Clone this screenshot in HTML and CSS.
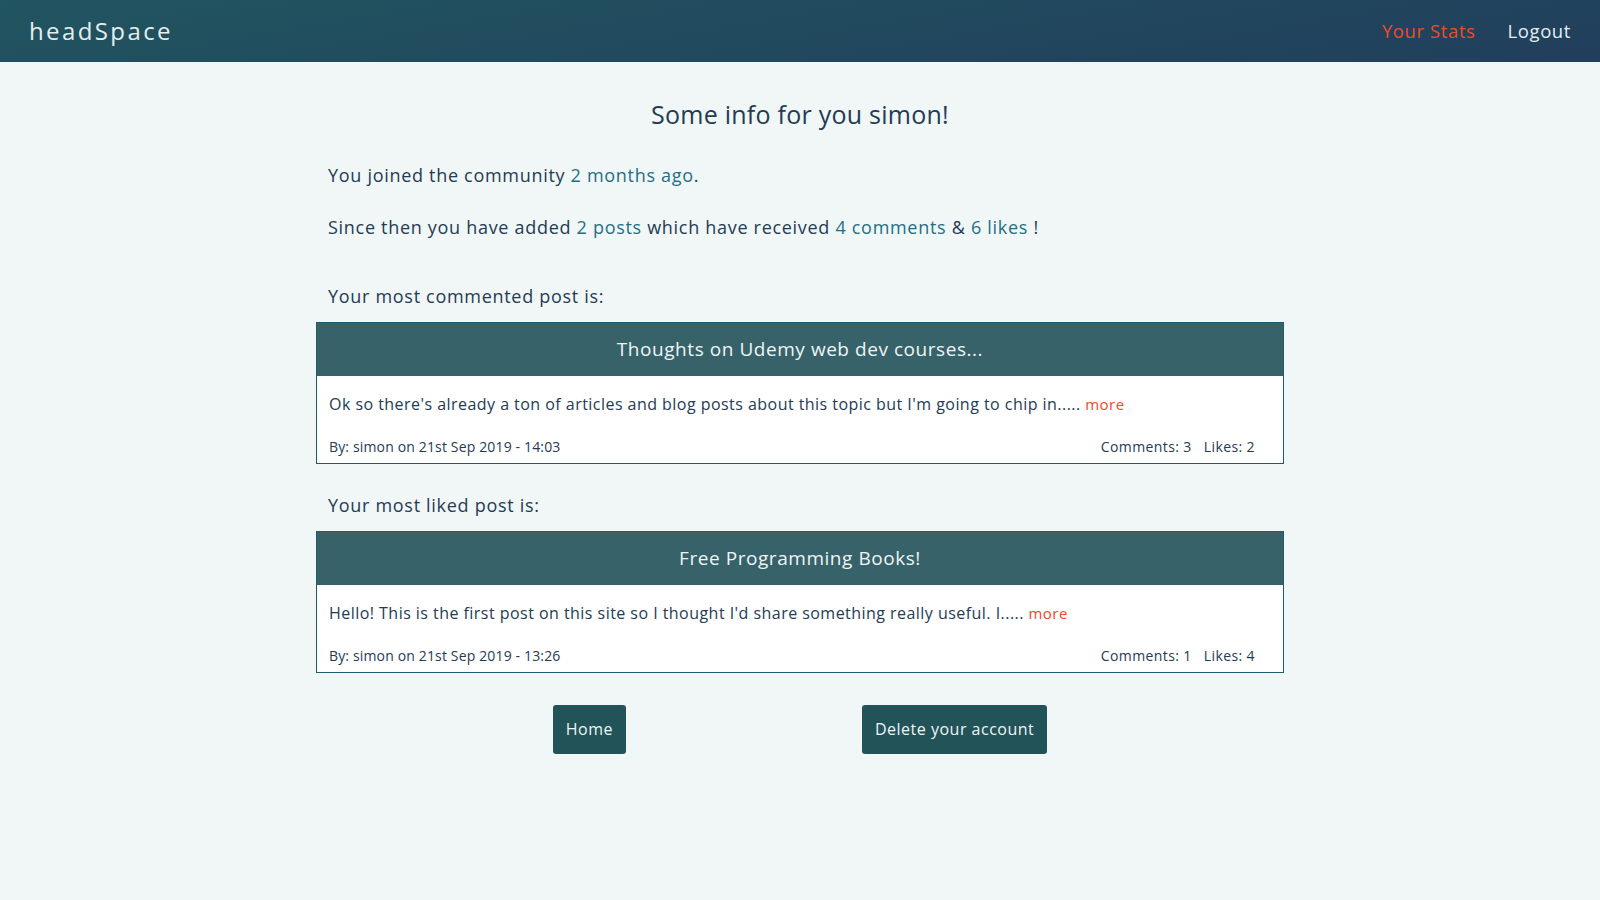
FILE: index.html
```html
<!DOCTYPE html>
<html lang="en">
<head>
<meta charset="utf-8">
<title>headSpace - Your Stats</title>
<link rel="stylesheet" href="styles.css">
</head>
<body>
<nav class="navbar">
  <a class="brand" href="#">headSpace</a>
  <div class="nav-links">
    <a class="nav-link active" href="#">Your Stats</a>
    <a class="nav-link" href="#">Logout</a>
  </div>
</nav>
<main class="container">
  <h1 class="title">Some info for you simon!</h1>
  <p class="info">You joined the community <span class="hl">2 months ago</span>.</p>
  <p class="info">Since then you have added <span class="hl">2 posts</span> which have received <span class="hl">4 comments</span> &amp; <span class="hl">6 likes</span> !</p>

  <p class="label first">Your most commented post is:</p>
  <div class="card">
    <div class="card-header">Thoughts on Udemy web dev courses...</div>
    <div class="card-body">
      <p class="excerpt">Ok so there's already a ton of articles and blog posts about this topic but I'm going to chip in..... <a class="more" href="#">more</a></p>
      <div class="meta">
        <span>By: simon on 21st Sep 2019 - 14:03</span>
        <span class="counts"><span>Comments: 3</span><span>Likes: 2</span></span>
      </div>
    </div>
  </div>

  <p class="label">Your most liked post is:</p>
  <div class="card">
    <div class="card-header">Free Programming Books!</div>
    <div class="card-body">
      <p class="excerpt">Hello! This is the first post on this site so I thought I'd share something really useful. I..... <a class="more" href="#">more</a></p>
      <div class="meta">
        <span>By: simon on 21st Sep 2019 - 13:26</span>
        <span class="counts"><span>Comments: 1</span><span>Likes: 4</span></span>
      </div>
    </div>
  </div>

  <div class="actions">
    <a class="btn" href="#">Home</a>
    <a class="btn" href="#">Delete your account</a>
  </div>
</main>
</body>
</html>
```

FILE: styles.css
```css
* { box-sizing: border-box; }
html, body { margin: 0; padding: 0; }
body {
  background: #f1f7f7;
  font-family: "Open Sans", "DejaVu Sans", sans-serif;
  color: #243b55;
}
a { text-decoration: none; }

.navbar {
  height: 62px;
  display: flex;
  align-items: center;
  justify-content: space-between;
  padding: 0 29px 2px;
  background: linear-gradient(170deg, #215560 0%, #213e5c 100%);
}
.brand {
  color: #e3eef0;
  font-size: 24px;
  letter-spacing: 2.4px;
}
.nav-links { display: flex; gap: 32px; }
.nav-link { color: #e3eef0; font-size: 18.5px; letter-spacing: 0.6px; }
.nav-link.active { color: #ee4a2a; }

.container {
  width: 968px;
  margin: 0 auto;
  padding-top: 30px;
}
.title {
  margin: 0;
  text-align: center;
  font-weight: 400;
  font-size: 25px;
  line-height: 44px;
  letter-spacing: 0.25px;
  color: #243b55;
}
.info {
  margin: 21px 0 0;
  padding: 0 12px;
  font-size: 18px;
  line-height: 36px;
  letter-spacing: 0.7px;
}
.info + .info { margin-top: 16px; }
.hl { color: #1f6f86; }

.label {
  margin: 27px 0 12px;
  padding: 0 12px;
  font-size: 18px;
  line-height: 28px;
  letter-spacing: 0.7px;
}
.label.first { margin-top: 37px; }

.card {
  border: 1px solid #1f5a6e;
  background: #fff;
}
.card-header {
  background: #376269;
  color: #eef5f6;
  text-align: center;
  font-size: 19px;
  height: 53px;
  line-height: 52px;
  letter-spacing: 0.55px;
}
.card-body { padding: 0 12px; }
.excerpt {
  margin: 0;
  font-size: 16px;
  line-height: 22px;
  padding-top: 17px;
  letter-spacing: 0.46px;
}
.more { color: #ee4a2a; font-size: 15px; }
.meta {
  display: flex;
  justify-content: space-between;
  font-size: 14px;
  line-height: 20px;
  padding: 22px 16px 6px 0;
  letter-spacing: 0.15px;
}
.counts { display: flex; gap: 12px; letter-spacing: 0.4px; }

.actions {
  display: flex;
  justify-content: center;
  gap: 236px;
  margin-top: 32px;
}
.btn {
  display: inline-block;
  background: #225358;
  color: #eef5f6;
  font-size: 16px;
  height: 49px;
  line-height: 49px;
  padding: 0 13px;
  border-radius: 3px;
  letter-spacing: 0.5px;
}
```
